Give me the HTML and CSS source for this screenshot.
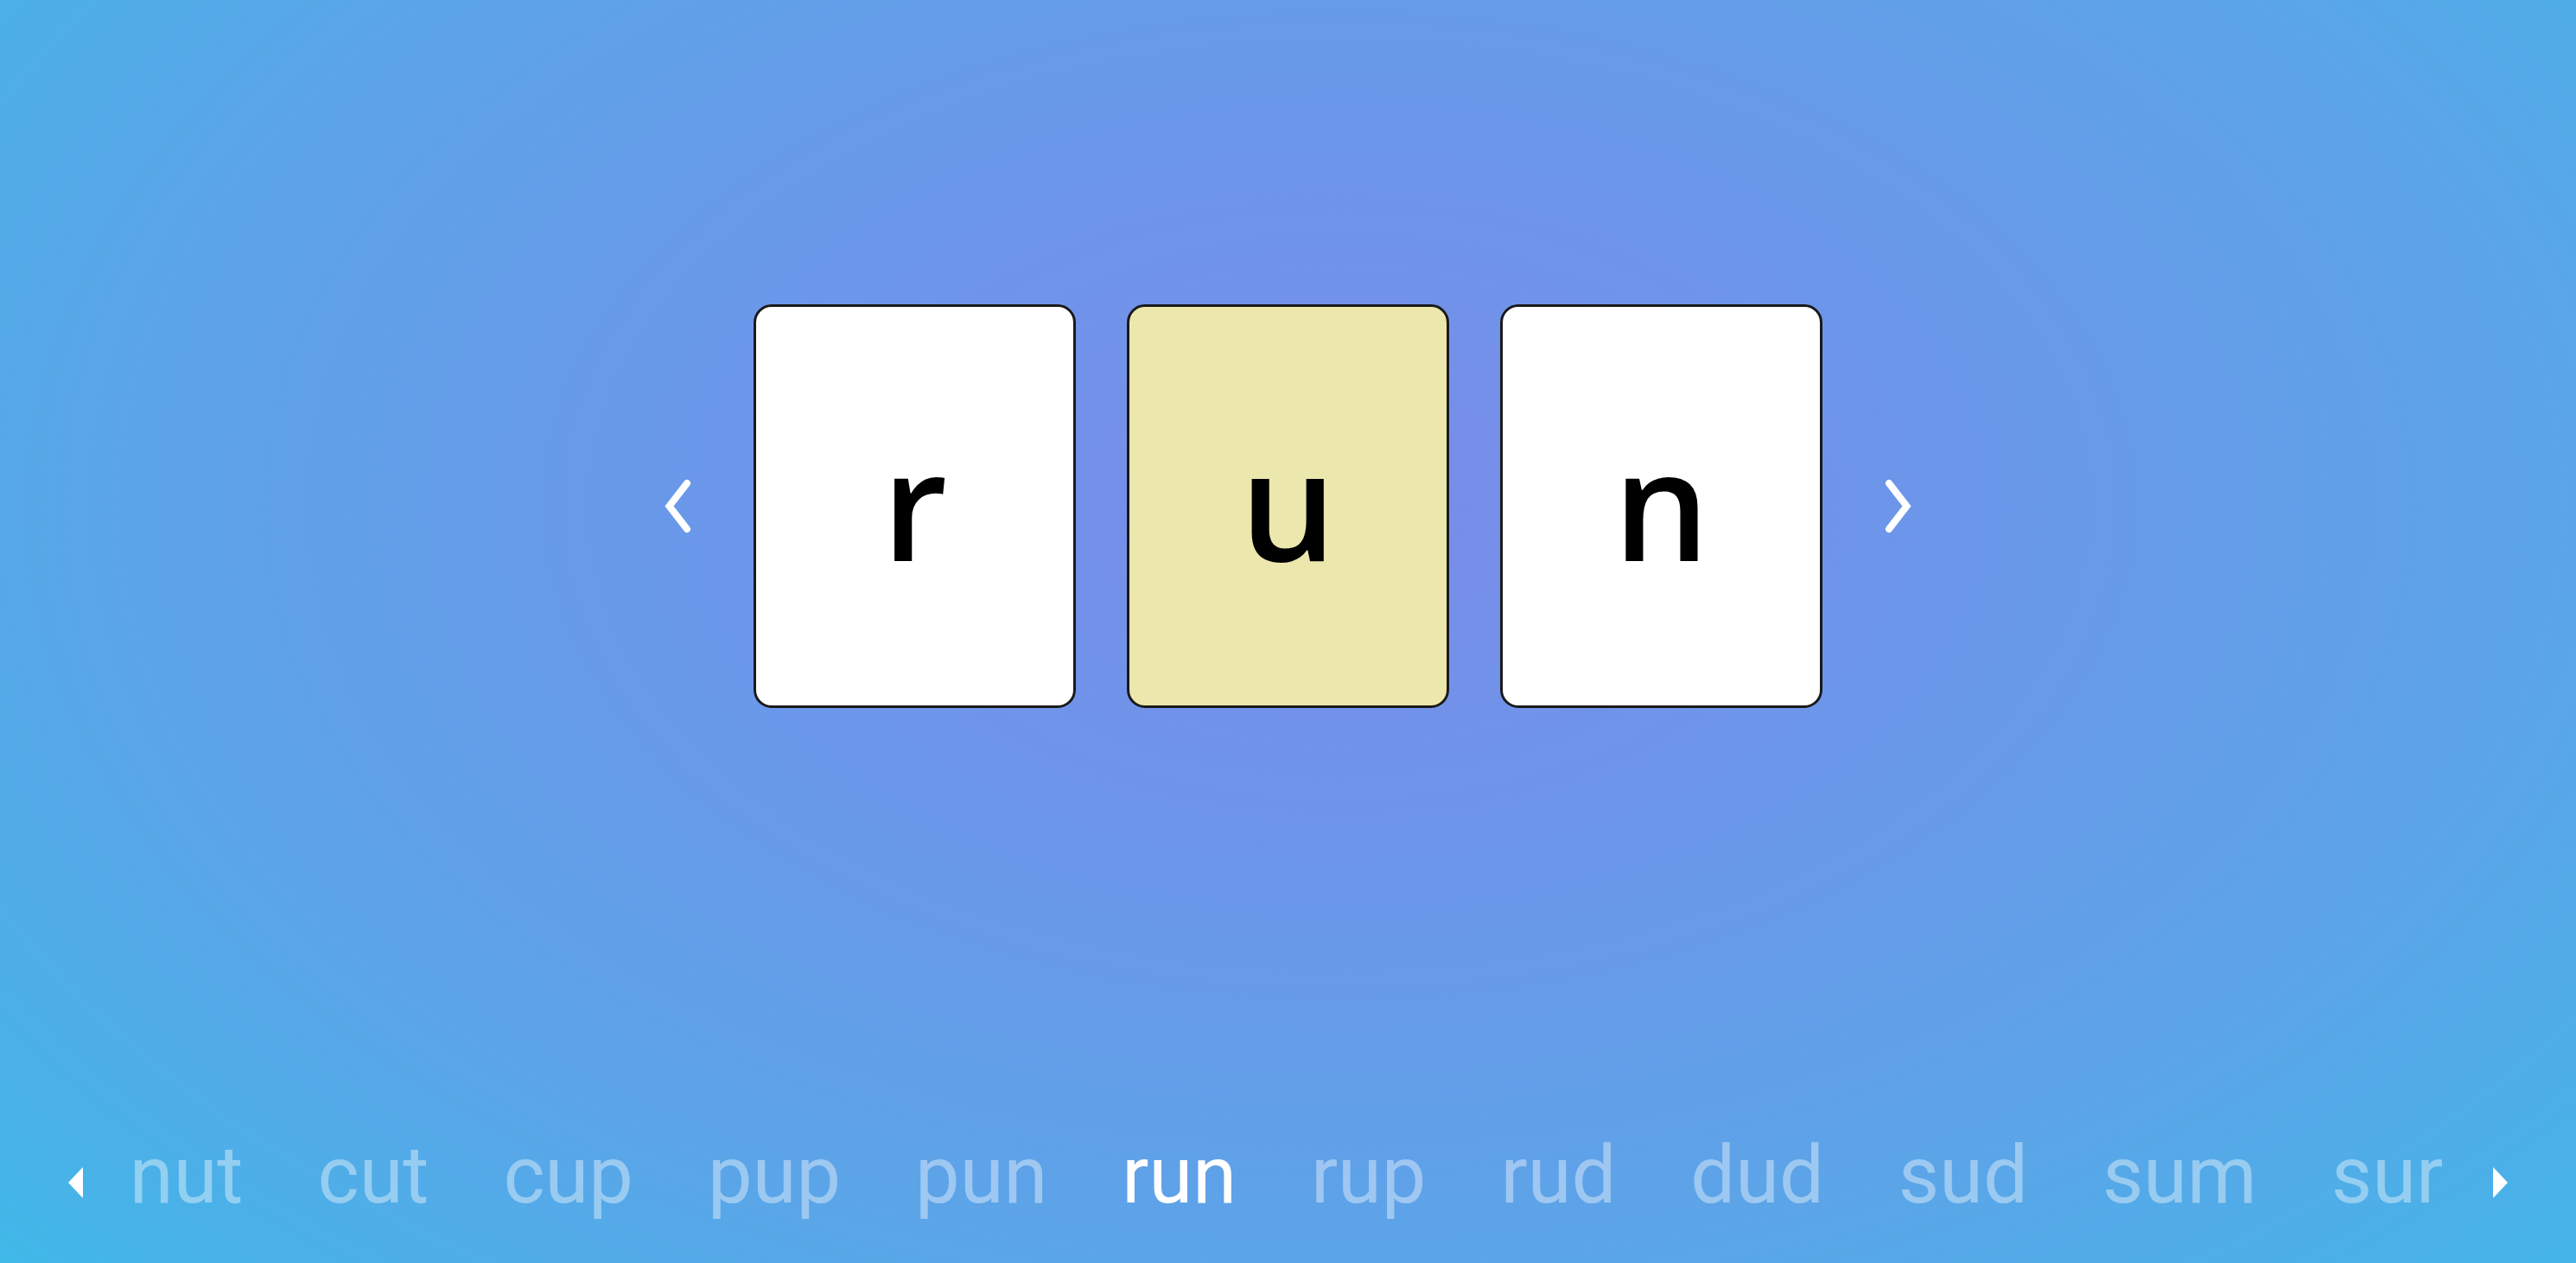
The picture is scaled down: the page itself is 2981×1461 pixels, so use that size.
FILE: index.html
```html
<!DOCTYPE html>
<html lang="en">
<head>
<meta charset="utf-8">
<title>run</title>
<link rel="stylesheet" href="styles.css">
</head>
<body>
<div class="app">
  <div class="stage">
    <button class="chev" aria-label="previous">
      <svg width="33" height="63" viewBox="0 0 33 63"><polyline points="28,5 7.5,31.5 28,58" fill="none" stroke="#fff" stroke-width="8" stroke-linecap="round" stroke-linejoin="miter"/></svg>
    </button>
    <div class="cards">
      <div class="card">r</div>
      <div class="card active">u</div>
      <div class="card">n</div>
    </div>
    <button class="chev" aria-label="next">
      <svg width="33" height="63" viewBox="0 0 33 63"><polyline points="5,5 25.5,31.5 5,58" fill="none" stroke="#fff" stroke-width="8" stroke-linecap="round" stroke-linejoin="miter"/></svg>
    </button>
  </div>
  <div class="strip">
    <span class="tri">
      <svg width="17" height="36" viewBox="0 0 17 36"><polygon points="17,0 0,18 17,36" fill="#fff"/></svg>
    </span>
    <div class="words">
      <span class="word">nut</span>
      <span class="word">cut</span>
      <span class="word">cup</span>
      <span class="word">pup</span>
      <span class="word">pun</span>
      <span class="word current">run</span>
      <span class="word">rup</span>
      <span class="word">rud</span>
      <span class="word">dud</span>
      <span class="word">sud</span>
      <span class="word">sum</span>
      <span class="word">sur</span>
    </div>
    <span class="tri">
      <svg width="17" height="36" viewBox="0 0 17 36"><polygon points="0,0 17,18 0,36" fill="#fff"/></svg>
    </span>
  </div>
</div>
</body>
</html>
```
FILE: styles.css
```css
html, body {
  margin: 0;
  padding: 0;
  height: 100%;
}
body {
  font-family: Roboto, "Liberation Sans", sans-serif;
  background: radial-gradient(ellipse 75% 95% at 52% 40%, #7a8ce9 0%, #6c96ea 30%, #5ca4e8 62%, #46b4e8 88%, #38bde8 100%);
  overflow: hidden;
}
.app {
  height: 1461px;
  display: flex;
  flex-direction: column;
}
.stage {
  padding-top: 352px;
  display: flex;
  align-items: center;
  justify-content: center;
  gap: 72px;
}
.chev {
  background: none;
  border: 0;
  padding: 0;
  width: 33px;
  height: 63px;
  display: flex;
  cursor: pointer;
}
.cards {
  display: flex;
  gap: 59px;
}
.card {
  box-sizing: border-box;
  width: 373px;
  height: 467px;
  padding-bottom: 8px;
  border: 3px solid #1a1a1a;
  border-radius: 21px;
  background: #ffffff;
  display: flex;
  align-items: center;
  justify-content: center;
  font-family: "Open Sans", Roboto, sans-serif;
  font-weight: 600;
  font-size: 175px;
  line-height: 1;
  color: #000;
}
.card.active {
  background: #ece7ad;
}
.strip {
  margin-top: auto;
  padding-bottom: 47px;
  display: flex;
  align-items: center;
  justify-content: center;
}
.tri {
  display: flex;
  margin-top: 15px;
}
.words {
  display: flex;
  gap: 86px;
  margin: 0 58px 0 54px;
}
.word {
  font-size: 92px;
  line-height: 108px;
  color: rgba(255, 255, 255, 0.4);
}
.word.current {
  color: #fff;
}
```
